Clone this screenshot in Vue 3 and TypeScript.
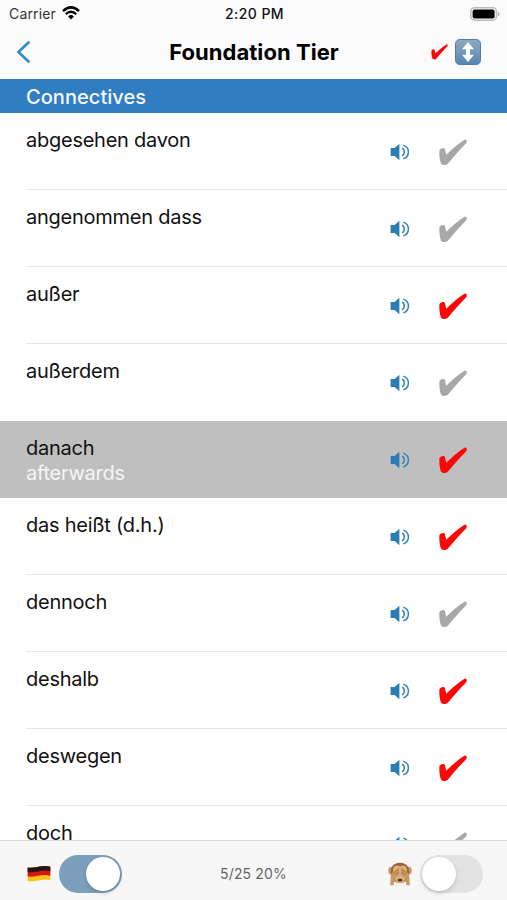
<script setup lang="ts">
import { ref } from 'vue'

interface Entry {
  term: string
  meaning: string
  known: boolean
}

const entries = ref<Entry[]>([
  { term: 'abgesehen davon', meaning: '', known: false },
  { term: 'angenommen dass', meaning: '', known: false },
  { term: 'außer', meaning: '', known: true },
  { term: 'außerdem', meaning: '', known: false },
  { term: 'danach', meaning: 'afterwards', known: true },
  { term: 'das heißt (d.h.)', meaning: '', known: true },
  { term: 'dennoch', meaning: '', known: false },
  { term: 'deshalb', meaning: '', known: true },
  { term: 'deswegen', meaning: '', known: true },
  { term: 'doch', meaning: '', known: false },
])

const selected = ref(4)
const germanFirst = ref(true)
const hidden = ref(false)
</script>

<template>
  <div class="screen">
    <header class="top">
      <div class="status">
        <div class="carrier">
          <span>Carrier</span>
          <svg class="wifi" viewBox="0 0 18 14" width="18" height="14">
            <path d="M1 5.1Q9-2.3 17 5.1" fill="none" stroke="#000" stroke-width="2.5" />
            <path d="M3.8 8.2Q9 3.3 14.2 8.2" fill="none" stroke="#000" stroke-width="2.3" />
            <path d="M6.1 10.4Q9 7.8 11.9 10.4L9 13.5Z" fill="#000" />
          </svg>
        </div>
        <span class="time">2:20 PM</span>
        <svg class="battery" viewBox="0 0 30 14" width="30" height="14">
          <rect x=".8" y=".8" width="25.6" height="12.4" rx="3.8" fill="#fff" stroke="#b9b9b9" stroke-width="1.5" />
          <rect x="2.6" y="2.5" width="22" height="9" rx="2" fill="#000" />
          <path d="M27.8 4.6Q29.7 5.2 29.7 7T27.8 9.4Z" fill="#b0b0b0" />
        </svg>
      </div>
      <nav class="nav">
        <button class="back" aria-label="Back">
          <svg viewBox="0 0 16 24" width="16" height="24">
            <path d="M14.3 1.7 3.4 12 14.3 22.3" fill="none" stroke="#338ac8" stroke-width="2.6" />
          </svg>
        </button>
        <h1>Foundation Tier</h1>
        <div class="actions">
          <svg class="small-check" viewBox="0 0 28 27" width="17" height="16">
            <path class="tick on" d="M.4 11.6C.8 9.3 4.9 7.9 5.9 10L7.2 15.8C12.8 10.4 19 4.7 25.5.7C27.2 0 28.4 2.1 27.4 3.9C21.6 9.8 14.9 17.2 9.4 24C7.5 26.6 3 27 1.8 24.1C.7 20.5.1 16.2.4 11.6Z" />
          </svg>
          <svg viewBox="0 0 26 26" width="26" height="26">
            <defs>
              <linearGradient id="sort-fill" x1="0" y1="0" x2="0" y2="1">
                <stop offset="0" stop-color="#8faac2" />
                <stop offset="1" stop-color="#5686b0" />
              </linearGradient>
            </defs>
            <rect x=".5" y=".5" width="25" height="25" rx="4.2" fill="url(#sort-fill)" stroke="#587999" />
            <path d="M13 3 19 10.2H15V15.8H19L13 23 7 15.8H11V10.2H7Z" fill="#fff" />
          </svg>
        </div>
      </nav>
    </header>

    <h2 class="section">Connectives</h2>

    <main class="list">
      <div
        v-for="(entry, i) in entries"
        :key="entry.term"
        class="row"
        :class="{ selected: i === selected, before: i === selected - 1 }"
        @click="selected = i"
      >
        <div class="words">
          <div>{{ entry.term }}</div>
          <div v-if="entry.meaning" class="meaning">{{ entry.meaning }}</div>
        </div>
        <svg class="speaker" viewBox="0 0 20 18" width="20" height="18">
          <path d="M.6 4.9H4.6L9.4.7V17.3L4.6 13.1H.6Z" fill="#2c7db1" />
          <path d="M12 5.3C15 6.3 15 11.7 12 12.7" fill="none" stroke="#3585b6" stroke-width="1.5" />
          <path d="M13.3 2.1C16.5 3.2 18.4 5.7 18.4 9S16.5 14.8 13.3 15.9" fill="none" stroke="#3585b6" stroke-width="1.5" />
        </svg>
        <svg class="check" viewBox="0 0 28 27" width="28" height="27" @click.stop="entry.known = !entry.known">
          <path class="tick" :class="{ on: entry.known }" d="M.4 11.6C.8 9.3 4.9 7.9 5.9 10L7.2 15.8C12.8 10.4 19 4.7 25.5.7C27.2 0 28.4 2.1 27.4 3.9C21.6 9.8 14.9 17.2 9.4 24C7.5 26.6 3 27 1.8 24.1C.7 20.5.1 16.2.4 11.6Z" />
        </svg>
      </div>
    </main>

    <footer class="toolbar">
      <div class="group">
        <svg viewBox="0 0 24 18" width="24" height="18">
          <defs>
            <clipPath id="flag-shape">
              <path d="M.7 2.4C7 4.2 14-.7 23.3 1.7V15.2C15 12.5 8 17.9 .7 15.9Z" />
            </clipPath>
          </defs>
          <g clip-path="url(#flag-shape)">
            <rect width="24" height="18" fill="#ffc315" />
            <path d="M0 0H24V11C15 8 8 13 0 11.3Z" fill="#d91313" />
            <path d="M0 0H24V6.2C15 3.8 8 8.6 0 6.9Z" fill="#251713" />
          </g>
        </svg>
        <button class="switch" :class="{ active: germanFirst }" aria-label="Language" @click="germanFirst = !germanFirst">
          <span class="knob" />
        </button>
      </div>
      <span class="progress">5/25 20%</span>
      <div class="group">
        <svg viewBox="0 0 24 24" width="24" height="24">
          <ellipse cx="3.3" cy="8.7" rx="3" ry="4" fill="#c7955e" />
          <ellipse cx="20.7" cy="8.7" rx="3" ry="4" fill="#c7955e" />
          <path d="M12 .8C6.4.8 2.6 4.4 3 10.3C3.2 16.7 5.8 21 12 21S20.8 16.7 21 10.3C21.4 4.4 17.6.8 12 .8Z" fill="#96633b" />
          <path d="M12 4.7C8.2 1.6 4.4 5.3 5 9.6L8 18H16L19 9.6C19.6 5.3 15.8 1.6 12 4.7Z" fill="#dcb27e" />
          <ellipse cx="12" cy="17.1" rx="5.3" ry="3.9" fill="#d5ae82" />
          <ellipse cx="12" cy="18.1" rx="2.4" ry="1.3" fill="#4f2e21" />
          <path d="M2.7 14Q2.7 10.8 5.5 9.2L10.2 5.8Q11.5 5.4 11.1 7.6L11.5 11.2Q11.3 14 8.3 15L6.7 16.2 5.5 23.2H2.2Z" fill="#c99861" />
          <path d="M21.3 14Q21.3 10.8 18.5 9.2L13.8 5.8Q12.5 5.4 12.9 7.6L12.5 11.2Q12.7 14 15.7 15L17.3 16.2 18.5 23.2H21.8Z" fill="#c99861" />
          <path d="M5 11.4 10.3 7.6M6.7 12.8 10.8 10M19 11.4 13.7 7.6M17.3 12.8 13.2 10" stroke="#94643d" stroke-width=".6" />
        </svg>
        <button class="switch" :class="{ active: hidden }" aria-label="Hide" @click="hidden = !hidden">
          <span class="knob" />
        </button>
      </div>
    </footer>
  </div>
</template>

<style>
body {
  margin: 0;
  overflow: hidden;
}
</style>

<style scoped>
.screen {
  display: flex;
  flex-direction: column;
  width: 507px;
  height: 900px;
  overflow: hidden;
  background: #fff;
  color: #111;
  font-family: Inter, "Liberation Sans", sans-serif;
}
button {
  display: block;
  padding: 0;
  border: 0;
  background: none;
}
svg {
  display: block;
  flex: none;
}
.top {
  flex: none;
  box-sizing: border-box;
  height: 79px;
  background: #fbfbfb;
}
.status {
  display: grid;
  grid-template-columns: 1fr auto 1fr;
  align-items: center;
  height: 27px;
  padding: 0 7px 0 9px;
  font-size: 14px;
  color: #333;
}
.carrier {
  display: flex;
  align-items: center;
  gap: 6px;
  letter-spacing: 0.15px;
}
.wifi {
  margin-top: -2px;
}
.time {
  font-weight: 500;
  color: #111;
  letter-spacing: 0.45px;
}
.battery {
  justify-self: end;
}
.nav {
  display: grid;
  grid-template-columns: 1fr auto 1fr;
  align-items: center;
  height: 50px;
  padding: 0 26px 0 15px;
}
h1 {
  margin: 0 0 0 12px;
  font-size: 22px;
  font-weight: 700;
  line-height: 26px;
  color: #000;
  letter-spacing: 0.05px;
}
.actions {
  display: flex;
  align-items: center;
  justify-content: flex-end;
  gap: 7px;
}
.section {
  flex: none;
  box-sizing: border-box;
  height: 34px;
  margin: 0;
  padding-left: 26px;
  background: #307dc1;
  color: #f5faff;
  font-size: 20px;
  font-weight: 500;
  line-height: 36px;
  letter-spacing: 0.05px;
}
.list {
  flex: 1;
  min-height: 0;
  overflow: hidden;
}
.row {
  display: flex;
  align-items: flex-start;
  box-sizing: border-box;
  height: 77px;
  padding: 15px 40px 0 26px;
  background: linear-gradient(#e7e7e7, #e7e7e7) 26px 100% / 100% 1px no-repeat;
}
.row.before {
  background: none;
}
.row.selected {
  background: #bfbfbf;
}
.words {
  flex: 1;
  font-size: 20px;
  line-height: 25px;
  letter-spacing: -0.25px;
}
.meaning {
  color: #f5f5f5;
}
.speaker {
  margin: 15px 29px 0 0;
}
.check {
  margin-top: 11px;
}
.tick {
  fill: #a8a8a8;
}
.tick.on {
  fill: #fc0606;
}
.toolbar {
  flex: none;
  box-sizing: border-box;
  display: grid;
  grid-template-columns: 1fr auto 1fr;
  align-items: center;
  height: 60px;
  padding: 6px 24px 0 27px;
  border-top: 1px solid #d9d9d9;
  background: #f7f7f7;
}
.group {
  display: flex;
  align-items: center;
  gap: 8px;
}
.group:last-child {
  justify-content: flex-end;
}
.progress {
  margin-right: 3px;
  font-size: 14px;
  color: #666;
  letter-spacing: 0.15px;
}
.switch {
  display: flex;
  align-items: center;
  box-sizing: border-box;
  width: 63px;
  height: 38px;
  padding: 2px;
  border-radius: 19px;
  background: #e3e3e3;
}
.switch.active {
  justify-content: flex-end;
  background: #7b9fbd;
}
.knob {
  width: 34px;
  height: 34px;
  border-radius: 50%;
  background: #fff;
  box-shadow: 0 2px 4px rgba(0, 0, 0, 0.16);
}
</style>
